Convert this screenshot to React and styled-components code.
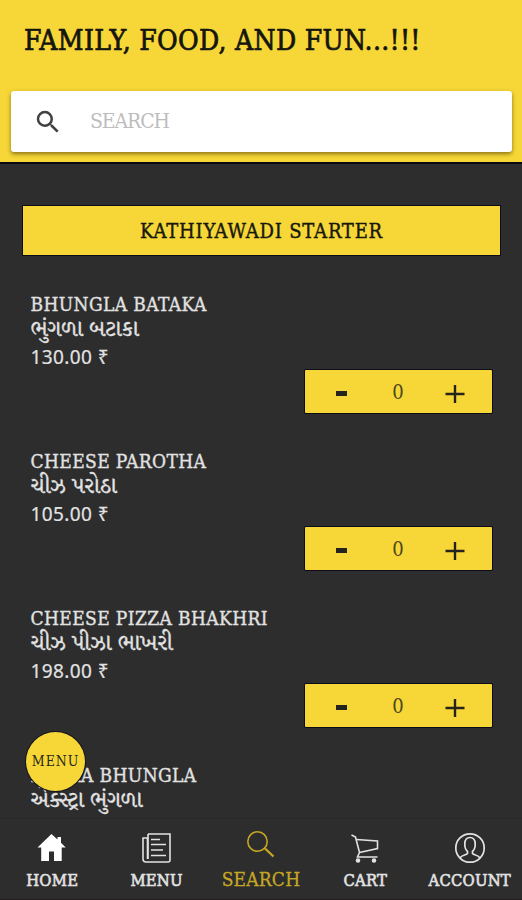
import React, { useState } from "react";
import styled, { createGlobalStyle } from "styled-components";

const yellow = "#f6d737";
const dark = "#2d2d2d";
const light = "#e2e2e2";

const GlobalStyle = createGlobalStyle`
  * {
    box-sizing: border-box;
  }
  body {
    margin: 0;
    background-color: ${dark};
    overflow: hidden;
    font-family: "DejaVu Serif Condensed", "DejaVu Serif", "Noto Serif Gujarati",
      "Noto Sans Gujarati", serif;
    font-stretch: condensed;
  }
  button, input {
    font: inherit;
    color: inherit;
    border: none;
    background: none;
    padding: 0;
  }
`;

const Screen = styled.div`
  height: 900px;
  width: 522px;
  display: flex;
  flex-direction: column;
  position: relative;
  background-color: ${dark};
  overflow: hidden;
`;

const Header = styled.header`
  background-color: ${yellow};
  height: 164px;
  flex: none;
  border-bottom: 2px solid #090912;
`;

const Title = styled.h1`
  margin: 0;
  padding: 22px 0 0 24px;
  height: 91px;
  font-size: 28px;
  line-height: 38px;
  font-weight: 400;
  letter-spacing: 0.3px;
  color: #15150f;
  white-space: nowrap;
  -webkit-text-stroke: 0.7px #15150f;
`;

const SearchBar = styled.label`
  display: flex;
  align-items: center;
  height: 61px;
  margin: 0 10px 0 11px;
  padding-left: 22px;
  background-color: #fff;
  border-radius: 3px;
  box-shadow: 0 2px 4px rgba(70, 50, 0, 0.6);

  svg {
    width: 30px;
    height: 30px;
    fill: #414141;
  }
`;

const SearchInput = styled.input`
  margin: -2px 0 0 27px;
  width: 380px;
  font-size: 21px;
  letter-spacing: -1.1px;
  color: #333;
  outline: none;

  &::placeholder {
    color: #bdbdbd;
    opacity: 1;
  }
`;

const List = styled.main`
  flex: 1;
  min-height: 0;
  overflow: hidden;
  padding: 42px 22px 0 23px;
`;

const Category = styled.h2`
  margin: 0 0 37px;
  height: 49px;
  display: flex;
  align-items: center;
  justify-content: center;
  background-color: ${yellow};
  box-shadow: 0 0 0 1px #0c0c18;
  color: #18180f;
  font-size: 20px;
  font-weight: 400;
  letter-spacing: 0.8px;
  -webkit-text-stroke: 0.4px #18180f;
`;

const Item = styled.article`
  height: 157px;
  padding: 0 8px 0 7.5px;
  display: flex;
  flex-direction: column;
  color: ${light};
`;

const Name = styled.div`
  font-size: 19px;
  line-height: 25px;
  white-space: nowrap;
  letter-spacing: 0.4px;
  -webkit-text-stroke: 0.35px ${light};
`;

const LocalName = styled.div`
  font-size: 22.5px;
  line-height: 23px;
  height: 27px;
  white-space: nowrap;
  -webkit-text-stroke: 0.3px ${light};
`;

const Price = styled.div`
  font-family: "Noto Sans", "DejaVu Sans", sans-serif;
  font-stretch: normal;
  font-size: 19px;
  line-height: 26px;
  letter-spacing: 0.4px;
  -webkit-text-stroke: 0.2px ${light};
`;

const Quantity = styled.div`
  align-self: flex-end;
  flex: none;
  width: 187px;
  height: 43px;
  display: grid;
  grid-template-columns: 73px 40px 74px;
  align-items: center;
  justify-items: center;
  background-color: ${yellow};
  color: #24241c;
  border-radius: 1px;
  box-shadow: 0 0 0 1px #0c0c18;
`;

const StepButton = styled.button`
  display: flex;
  margin-top: 2px;
  cursor: pointer;
`;

const Count = styled.span`
  font-size: 20px;
  line-height: 40px;
  color: #4d471d;
`;

const MenuButton = styled.button`
  position: absolute;
  left: 26px;
  top: 732px;
  width: 59px;
  height: 59px;
  border-radius: 50%;
  background-color: ${yellow};
  box-shadow: 0 0 0 1px #15151c;
  color: #29281c;
  font-size: 14px;
  letter-spacing: 0.9px;
  padding-bottom: 2px;
  cursor: pointer;
`;

const TabBar = styled.nav`
  flex: none;
  height: 82px;
  display: grid;
  grid-template-columns: repeat(5, 104.4px);
  background-color: ${dark};
  border-top: 1px solid #292929;
  border-bottom: 1px solid #241c1f;
`;

const Tab = styled.button`
  display: flex;
  flex-direction: column;
  align-items: center;
  padding-top: ${(props) => (props.$active ? "10px" : "13px")};
  color: ${(props) => (props.$active ? "#c5a723" : light)};
  cursor: pointer;

  svg {
    width: 32px;
    height: 32px;
    flex: none;
  }
`;

const TabLabel = styled.span`
  font-size: ${(props) => (props.$active ? "19px" : "16.5px")};
  line-height: 30px;
  margin-top: ${(props) => (props.$active ? "3px" : "2px")};
  letter-spacing: 0.2px;
  -webkit-text-stroke: ${(props) => (props.$active ? "0.3px" : "0.6px")};
`;

const icons = {
  HOME: (
    <svg viewBox="0 0 32 32">
      <path d="M15.500 2 1.500 15.500h3.700V29H13V19.500h5V29h7.700V15.500h4L25 10.800V5h-3.500v2.600z" fill="#fff" />
    </svg>
  ),
  MENU: (
    <svg viewBox="0 0 32 32" fill="none" stroke="currentColor" strokeWidth="1.6">
      <path d="M7 2h22v26a2 2 0 0 1-2 2H5a3 3 0 0 1-3-3V6h4.500v21" />
      <path d="M7 2v25" />
      <path d="M10 7.500h9M10 12.500h15M10 18h12M10 23.500h15" />
    </svg>
  ),
  SEARCH: (
    <svg viewBox="0 0 32 32" fill="none" stroke="currentColor" strokeWidth="1.6">
      <circle cx="12.500" cy="12.500" r="9.700" />
      <path d="m20 19.500 8.500 8" strokeWidth="2.400" />
    </svg>
  ),
  CART: (
    <svg viewBox="0 0 32 32" fill="none" stroke="currentColor" strokeWidth="1.6">
      <path d="m2.500 3 4 2 4 15.500L8.500 25H28.500" />
      <path d="m7.300 7.500 21.200 1.500v7.500L10.500 20.500" />
      <circle cx="9" cy="28.500" r="1.500" fill="currentColor" />
      <circle cx="25" cy="28.500" r="1.500" fill="currentColor" />
    </svg>
  ),
  ACCOUNT: (
    <svg viewBox="0 0 32 32" fill="none" stroke="currentColor" strokeWidth="1.7">
      <circle cx="16" cy="16" r="14.200" />
      <path d="M6 26c2-3.500 6-2.500 7.500-4.500V19.500c-3.500-3-4.500-14 2.500-14s6 11 2.500 14v2C20 23.500 24 22.500 26 26" />
    </svg>
  ),
};

const items = [
  { name: "BHUNGLA BATAKA", local: "ભુંગળા બટાકા", price: "130.00" },
  { name: "CHEESE PAROTHA", local: "ચીઝ પરોઠા", price: "105.00" },
  { name: "CHEESE PIZZA BHAKHRI", local: "ચીઝ પીઝા ભાખરી", price: "198.00" },
  { name: "EXTRA BHUNGLA", local: "એક્સ્ટ્રા ભુંગળા" },
];

function FoodItem({ item }) {
  const [count, setCount] = useState(0);

  return (
    <Item>
      <Name>{item.name}</Name>
      <LocalName>{item.local}</LocalName>
      {item.price && (
        <>
          <Price>{item.price} ₹</Price>
          <Quantity>
            <StepButton onClick={() => setCount(Math.max(0, count - 1))}>
              <svg width="20" height="20">
                <path d="M4 10.500h11" stroke="currentColor" strokeWidth="5" />
              </svg>
            </StepButton>
            <Count>{count}</Count>
            <StepButton onClick={() => setCount(count + 1)}>
              <svg width="20" height="20">
                <path d="M.5 11h19M10 2v18" stroke="currentColor" strokeWidth="2.400" />
              </svg>
            </StepButton>
          </Quantity>
        </>
      )}
    </Item>
  );
}

function App() {
  const [tab, setTab] = useState("SEARCH");

  return (
    <>
      <GlobalStyle />
      <Screen>
        <Header>
          <Title>FAMILY, FOOD, AND FUN...!!!</Title>
          <SearchBar>
            <svg viewBox="0 0 24 24">
              <path d="M15.500 14h-.79l-.28-.27A6.471 6.471 0 0 0 16 9.500 6.500 6.500 0 1 0 9.500 16c1.610 0 3.090-.59 4.230-1.570l.27.28v.79l5 4.990L20.490 19zm-6 0a4.500 4.500 0 1 1 0-9 4.500 4.500 0 0 1 0 9z" />
            </svg>
            <SearchInput placeholder="SEARCH" />
          </SearchBar>
        </Header>
        <List>
          <Category>KATHIYAWADI STARTER</Category>
          {items.map((item) => (
            <FoodItem key={item.name} item={item} />
          ))}
        </List>
        <MenuButton>MENU</MenuButton>
        <TabBar>
          {Object.keys(icons).map((name) => (
            <Tab key={name} $active={tab === name} onClick={() => setTab(name)}>
              {icons[name]}
              <TabLabel $active={tab === name}>{name}</TabLabel>
            </Tab>
          ))}
        </TabBar>
      </Screen>
    </>
  );
}

export default App;
